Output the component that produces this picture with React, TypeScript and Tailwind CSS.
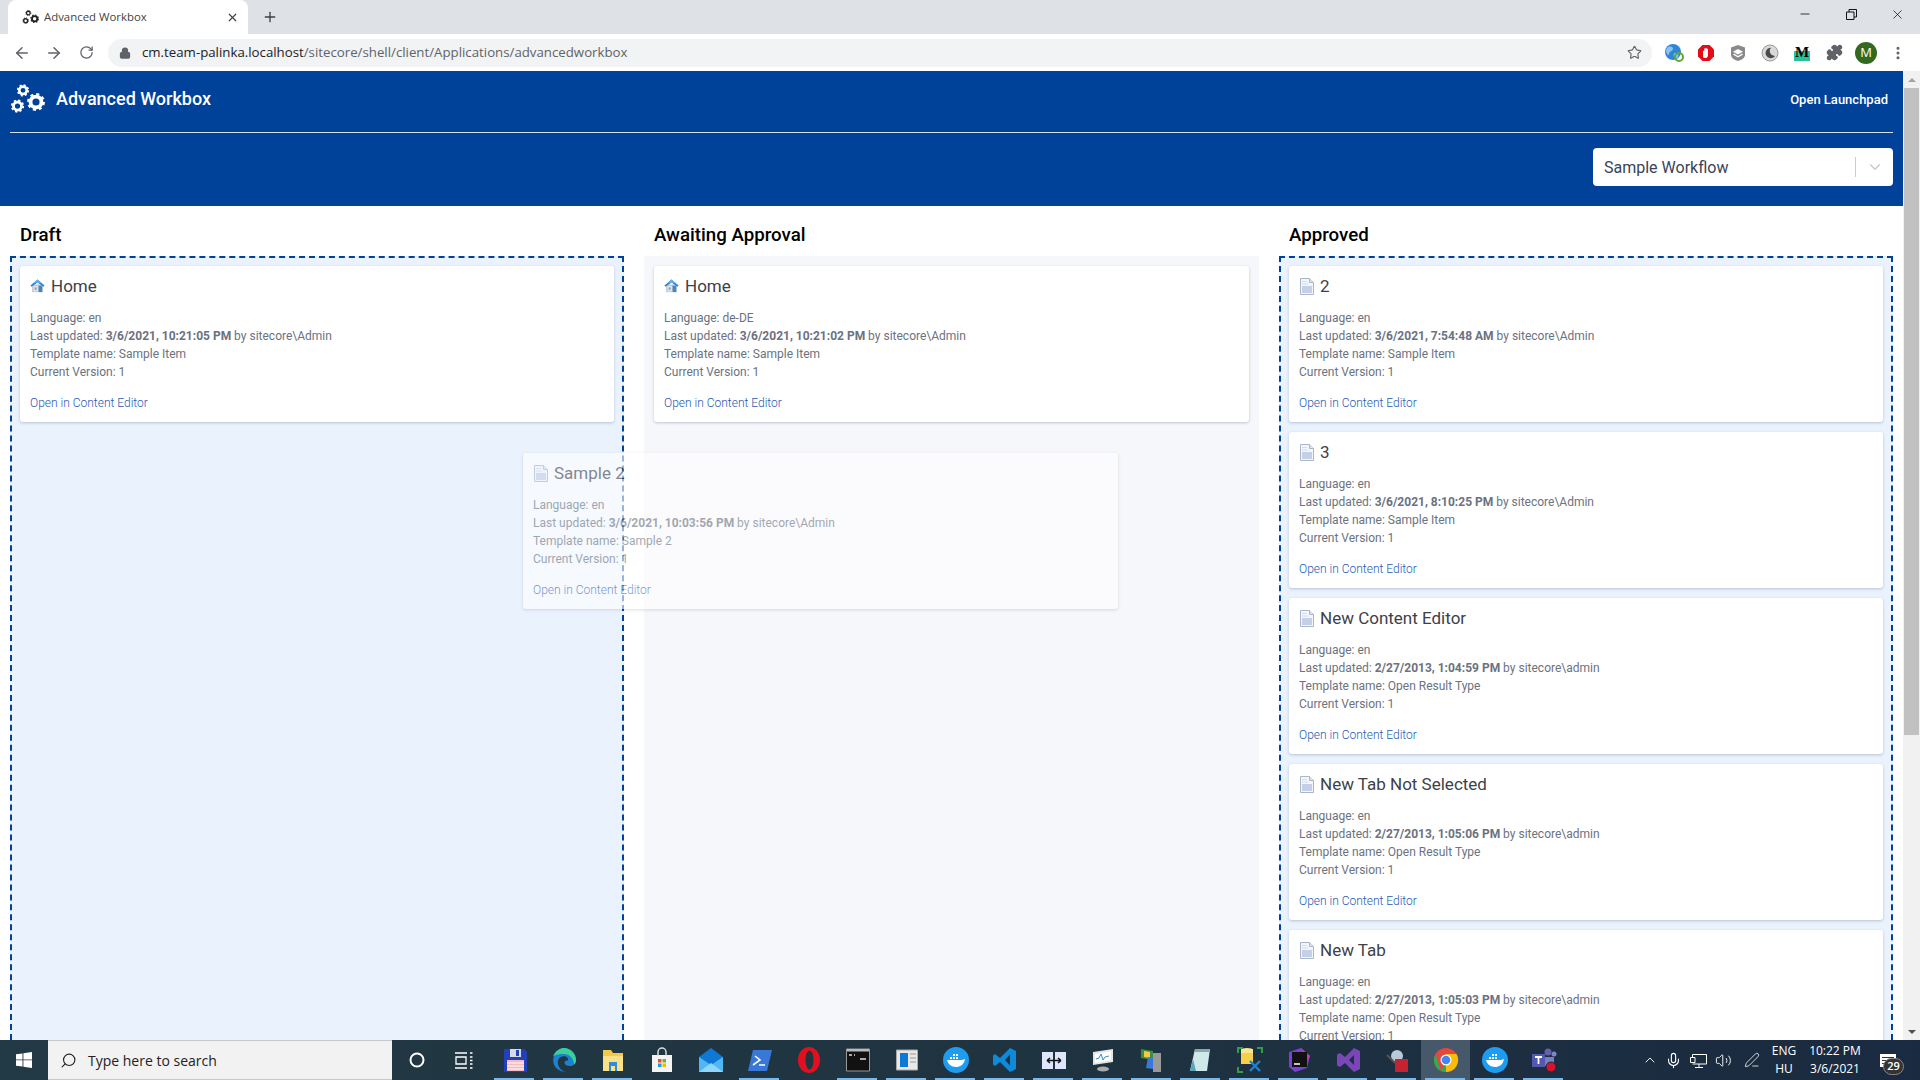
import React from "react";
import { ArrowLeft, ArrowRight, RotateCw, Lock, Star, Plus, X, Minus, ChevronDown, EllipsisVertical, Puzzle, Search, ChevronUp, Mic, Volume2, PenLine } from "lucide-react";

const Gear = ({ cx, cy, r, c = "#fff" }: { cx: number; cy: number; r: number; c?: string }) => {
  const outer = r * 1.02;
  const circ = 2 * Math.PI * outer;
  return (
    <g>
      <circle cx={cx} cy={cy} r={r * 0.72} fill="none" stroke={c} strokeWidth={r * 0.5} />
      <circle cx={cx} cy={cy} r={outer} fill="none" stroke={c} strokeWidth={r * 0.32} strokeDasharray={`${circ / 16} ${circ / 16}`} />
    </g>
  );
};

const Gears = ({ size, c = "#fff" }: { size: number; c?: string }) => (
  <svg width={size} height={size * 0.83} viewBox="0 0 35 29">
    <Gear cx={13} cy={6.300} r={5.200} c={c} />
    <Gear cx={7.500} cy={22} r={5.600} c={c} />
    <Gear cx={26} cy={18} r={7.600} c={c} />
  </svg>
);

const HomeIcon = () => (
  <svg width="16" height="16" viewBox="0 0 16 16">
    <path d="M2.500 6.500h11v8h-11z" fill="#a9b4bf" />
    <path d="M3.500 7.500h5v6.500h-5z" fill="#dfe5eb" />
    <path d="M5 9.500h2v2.500H5z" fill="#7f9db8" />
    <path d="M9.500 8h3.500v6.500H9.500z" fill="#3f87c8" />
    <path d="M8 1 15.500 7.500l-1 1.200L8 4.300 1.500 8.700l-1-1.200z" fill="#2f80d0" />
    <path d="M8 1 12.800 5.300 8 4.300 3.200 5.300z" fill="#63b0ec" />
  </svg>
);

const DocIcon = () => (
  <svg width="14" height="17" viewBox="0 0 14 17">
    <path d="M.5.5h9l4 4v12H.5z" fill="#f3f6fb" stroke="#a9b6cc" />
    <path d="M9.500.5v4h4" fill="#dfe6f2" stroke="#a9b6cc" />
    <path d="M2 8h10v7H2z" fill="#c5d0e6" />
    <path d="M2 3h5v1H2zM2 5.500h6v1H2z" fill="#d4dcea" />
  </svg>
);

type CardData = { icon: "home" | "doc"; title: string; lang: string; date: string; by: string; tpl: string };

const Card = ({ d, className = "" }: { d: CardData; className?: string }) => (
  <div className={`h-[156px] shrink-0 rounded-[3px] bg-white p-[10px] shadow-[0_1px_3px_rgba(60,70,100,0.28)] font-['Roboto',sans-serif] ${className}`}>
    <div className="flex h-[20px] items-center gap-[6px] text-[17px] leading-[20px] text-[#3d4148]">
      <span className="flex w-[15px] justify-center">{d.icon === "home" ? <HomeIcon /> : <DocIcon />}</span>
      <span>{d.title}</span>
    </div>
    <div className="mt-[13px] text-[12px] leading-[18px] text-[#6b7280]">
      <div>Language: {d.lang}</div>
      <div>
        Last updated: <b className="font-bold">{d.date}</b> by {d.by}
      </div>
      <div>Template name: {d.tpl}</div>
      <div>Current Version: 1</div>
    </div>
    <div className="mt-[13px] text-[12px] font-light leading-[18px] text-[#1f5ab4]">Open in Content Editor</div>
  </div>
);

const draft: CardData[] = [{ icon: "home", title: "Home", lang: "en", date: "3/6/2021, 10:21:05 PM", by: "sitecore\\Admin", tpl: "Sample Item" }];
const awaiting: CardData[] = [{ icon: "home", title: "Home", lang: "de-DE", date: "3/6/2021, 10:21:02 PM", by: "sitecore\\Admin", tpl: "Sample Item" }];
const approved: CardData[] = [
  { icon: "doc", title: "2", lang: "en", date: "3/6/2021, 7:54:48 AM", by: "sitecore\\Admin", tpl: "Sample Item" },
  { icon: "doc", title: "3", lang: "en", date: "3/6/2021, 8:10:25 PM", by: "sitecore\\Admin", tpl: "Sample Item" },
  { icon: "doc", title: "New Content Editor", lang: "en", date: "2/27/2013, 1:04:59 PM", by: "sitecore\\admin", tpl: "Open Result Type" },
  { icon: "doc", title: "New Tab Not Selected", lang: "en", date: "2/27/2013, 1:05:06 PM", by: "sitecore\\admin", tpl: "Open Result Type" },
  { icon: "doc", title: "New Tab", lang: "en", date: "2/27/2013, 1:05:03 PM", by: "sitecore\\admin", tpl: "Open Result Type" },
];
const sample: CardData = { icon: "doc", title: "Sample 2", lang: "en", date: "3/6/2021, 10:03:56 PM", by: "sitecore\\Admin", tpl: "Sample 2" };

const Column = ({ title, cards, active }: { title: string; cards: CardData[]; active: boolean }) => (
  <div className="flex min-h-0 min-w-0 flex-col">
    <h2 className="mb-[11px] mt-[19px] px-[10px] font-['Roboto',sans-serif] text-[18.700px] font-medium leading-[20px] text-black">{title}</h2>
    <div className={`-mb-[10px] flex min-h-0 flex-1 flex-col gap-[10px] overflow-hidden ${active ? "border-2 border-dashed border-[#00419c] bg-[#eaf2fe] p-[8px]" : "bg-[#f5f7fa] p-[10px]"}`}>
      {cards.map((c) => (
        <Card key={c.title} d={c} />
      ))}
    </div>
  </div>
);

const Ext = {
  globe: (
    <svg width="22" height="22" viewBox="0 0 22 22">
      <circle cx="10" cy="10" r="8" fill="#2f86d8" />
      <path d="M5 5c3-1 5 0 5 2s-4 2-4 5-3-1-3-3 1-3 2-4zM12 11c3 0 4 2 3 4s-3 2-4 0 0-4 1-4z" fill="#8cc2ee" />
      <circle cx="16" cy="15" r="4" fill="none" stroke="#5fa82e" strokeWidth="2" />
    </svg>
  ),
  stop: (
    <svg width="18" height="18" viewBox="0 0 18 18">
      <path d="M5.500 1h7L17 5.500v7L12.500 17h-7L1 12.500v-7z" fill="#e30d17" />
      <path d="M6 13V7.500c0-.9 1.200-.9 1.200 0V5c0-.9 1.300-.9 1.300 0v-.5c0-.9 1.300-.9 1.300 0V5.500c0-.9 1.200-.9 1.200 0V11c0 2-1 3-2.500 3S6.500 14 6 13z" fill="#fff" />
    </svg>
  ),
  shield: (
    <svg width="18" height="18" viewBox="0 0 18 18">
      <path d="M9 1l7 2.400V11c0 3-3.500 5-7 6-3.500-1-7-3-7-6V3.400z" fill="#8a8a8a" />
      <path d="M9 5l5 2.800L9 10.600 4 7.800z" fill="#fff" />
      <path d="M4.500 10.200 9 12.800l4.500-2.600" fill="none" stroke="#fff" strokeWidth="1.400" />
    </svg>
  ),
  moon: (
    <svg width="18" height="18" viewBox="0 0 18 18">
      <circle cx="9" cy="9" r="8" fill="#d9d9d9" stroke="#9a9a9a" />
      <path d="M10 3.800a5.200 5.200 0 1 0 4 8.200 5 5 0 0 1-4-8.200z" fill="#4a4a4a" />
    </svg>
  ),
  m: (
    <div className="flex h-[16px] w-[16px] items-center justify-center bg-gradient-to-b from-white from-40% to-[#2bbf9c] to-40%">
      <span className="font-['Liberation_Serif',serif] text-[15px] font-bold leading-none text-black">M</span>
    </div>
  ),
};

const Chrome = () => (
  <div className="shrink-0 font-['Open_Sans',sans-serif]">
    <div className="relative flex h-[34px] bg-[#dee1e6]">
      <div className="ml-[8px] flex h-[34px] w-[240px] items-center rounded-t-[8px] bg-white pl-[13px] pr-[9px]">
        <span className="flex w-[18px] justify-center"><Gears size={17} c="#222" /></span>
        <span className="ml-[5px] flex-1 text-[11.400px] text-[#444]">Advanced Workbox</span>
        <X size={13} strokeWidth={2.2} className="text-[#444]" />
      </div>
      <div className="ml-[14px] flex h-[34px] items-center">
        <Plus size={16} strokeWidth={2} className="text-[#3c4043]" />
      </div>
      <div className="ml-auto flex h-[28px] items-center text-[#111]">
        <div className="flex w-[46px] justify-center"><Minus size={14} strokeWidth={1.4} /></div>
        <div className="flex w-[46px] justify-center">
          <svg width="11" height="11" viewBox="0 0 11 11" fill="none" stroke="#111"><path d="M.5 3h7.500v7.500H.5zM3 3V.5h7.500V8H8" /></svg>
        </div>
        <div className="flex w-[46px] justify-center"><X size={15} strokeWidth={1.2} /></div>
      </div>
    </div>
    <div className="flex h-[37px] items-center bg-white">
      <div className="flex w-[108px] items-center text-[#5f6368]">
        <span className="flex w-[44px] justify-center"><ArrowLeft size={18} strokeWidth={2} /></span>
        <span className="flex w-[20px] justify-center"><ArrowRight size={18} strokeWidth={2} /></span>
        <span className="flex w-[44px] justify-center"><RotateCw size={15} strokeWidth={2} /></span>
      </div>
      <div className="flex h-[28px] w-[1544px] items-center rounded-full bg-[#f1f3f4] pl-[11px] pr-[10px]">
        <Lock size={12} strokeWidth={2.5} fill="#5f6368" className="text-[#5f6368]" />
        <span className="ml-[11px] flex-1 text-[13.250px] text-[#5f6368]">
          <span className="text-[#202124]">cm.team-palinka.localhost</span>/sitecore/shell/client/Applications/advancedworkbox
        </span>
        <Star size={15} strokeWidth={1.8} className="text-[#5f6368]" />
      </div>
      <div className="ml-[6px] flex flex-1 items-center">
        {[Ext.globe, Ext.stop, Ext.shield, Ext.moon, Ext.m].map((e, i) => (
          <span key={i} className="flex w-[32px] justify-center">{e}</span>
        ))}
        <span className="flex w-[32px] justify-center"><Puzzle size={17} fill="#5f6368" className="text-[#5f6368]" /></span>
        <span className="flex w-[32px] justify-center">
          <span className="flex h-[22px] w-[22px] items-center justify-center rounded-full bg-[#33691e] text-[13px] text-white">M</span>
        </span>
        <span className="flex w-[32px] justify-center"><EllipsisVertical size={16} strokeWidth={2.6} className="text-[#5f6368]" /></span>
      </div>
    </div>
  </div>
);

const Header = () => (
  <header className="h-[135px] shrink-0 bg-[#00419a] px-[10px] font-['Roboto',sans-serif] text-white">
    <div className="flex h-[62px] items-start border-b border-[#d5dfee]">
      <div className="mt-[13px]"><Gears size={35} /></div>
      <span className="ml-[11px] mt-[16px] text-[18px] font-medium leading-[24px]">Advanced Workbox</span>
      <span className="ml-auto mr-[5px] mt-[21px] text-[13px] font-medium leading-[16px]">Open Launchpad</span>
    </div>
    <div className="mt-[15px] flex justify-end">
      <div className="flex h-[38px] w-[300px] items-center rounded-[4px] bg-white pl-[11px] text-[16px] text-[#3a4358]">
        <span className="flex-1 pt-[1px]">Sample Workflow</span>
        <span className="h-[20px] w-px bg-[#ccc]" />
        <span className="flex w-[37px] justify-center"><ChevronDown size={18} strokeWidth={2} className="text-[#ccc]" /></span>
      </div>
    </div>
  </header>
);

const Scrollbar = () => (
  <div className="flex w-[17px] shrink-0 flex-col bg-[#f1f1f1]">
    <div className="flex h-[17px] items-center justify-center">
      <span className="h-0 w-0 border-x-[4px] border-b-[4px] border-x-transparent border-b-[#a3a3a3]" />
    </div>
    <div className="mx-[1px] h-[647px] bg-[#c1c1c1]" />
    <div className="flex-1" />
    <div className="flex h-[17px] items-center justify-center">
      <span className="h-0 w-0 border-x-[4px] border-t-[4px] border-x-transparent border-t-[#505050]" />
    </div>
  </div>
);

const I = ({ children, w = 26, h = 26 }: { children: React.ReactNode; w?: number; h?: number }) => (
  <svg width={w} height={h} viewBox="0 0 26 26">{children}</svg>
);

const Docker = () => (
  <I>
    <circle cx="13" cy="13" r="13" fill="#1d9cf0" />
    <path d="M4 13h15c1 0 2-1 3-1-1 6-5 8-9 8-5 0-8-3-9-7z" fill="#fff" />
    <path d="M7 10h2v2H7zM10 10h2v2h-2zM13 10h2v2h-2zM10 7h2v2h-2zM13 7h2v2h-2z" fill="#fff" />
  </I>
);

const taskItems: { icon: React.ReactNode; on?: boolean; sel?: boolean }[] = [
  { icon: <I><circle cx="13" cy="13" r="6.500" fill="none" stroke="#fff" strokeWidth="2" /></I> },
  { icon: <I><g fill="none" stroke="#fff" strokeWidth="1.300"><path d="M3 10h10v7H3zM2 6h12M2 21h12M17 6h2.500M17 10h2.500M17 13.500h2.500M17 17h2.500M17 21h2.500" /></g></I> },
  { on: true, icon: <I><path d="M2 2h20l3 3v20H2z" fill="#2340b8" /><path d="M8 2h11v8H8z" fill="#d6d9e6" /><path d="M14 3h3v6h-3z" fill="#2340b8" /><path d="M5 13h17v11H5z" fill="#f6b9c0" /><path d="M5 16h17M5 19h17M5 22h17" stroke="#fff" /></I> },
  { on: true, icon: <I><path d="M13 1a12 12 0 0 1 12 12c0 4-3 6-6.500 6-3 0-5-1.500-5-3.500 0-1.500 1.500-2 3-2 1 0 1-3-2-4C10 8.500 6 12 7 17c.8 4 4 7.500 8.500 8A12 12 0 0 1 13 1z" fill="#1f7fd0" /><path d="M2 10C4 3 10 1 13 1c6 0 12 5 12 12 0 2-1 3.500-2 4.500 0-6-5-11-11-10.500C7 7 3 8 2 10z" fill="#3ccf9a" /></I> },
  { on: true, icon: <I><path d="M3 3h8l2 3h10v18H3z" fill="#f5c948" /><path d="M3 9h20v15H3z" fill="#fbe08a" /><path d="M9 15h8v9h-2v-5h-4v5H9z" fill="#2a8fd8" /></I> },
  { icon: <I><path d="M3 8h20v17H3z" fill="#f4f4f4" /><path d="M9 9V5a4 4 0 0 1 8 0v4" fill="none" stroke="#ddd" strokeWidth="1.500" /><path d="M9 12h3.500v3.500H9z" fill="#e8502c" /><path d="M13.500 12H17v3.500h-3.500z" fill="#7ab51d" /><path d="M9 16.500h3.500V20H9z" fill="#1b9be0" /><path d="M13.500 16.500H17V20h-3.500z" fill="#f8ba00" /></I> },
  { icon: <I><path d="M1 10 13 1l12 9v15H1z" fill="#0f78d4" /><path d="M1 10l12 8 12-8v15H1z" fill="#4fb8f2" /><path d="M1 25l12-9 12 9z" fill="#8fd6fa" /></I> },
  { on: true, icon: <I><path d="M6 3h19l-5 21H1z" fill="#3a78d8" /><path d="M8 9l5 4-7 5M12 18h6" fill="none" stroke="#fff" strokeWidth="1.600" /></I> },
  { icon: <I><ellipse cx="13" cy="13" rx="11" ry="13" fill="#e01020" /><ellipse cx="13.500" cy="13" rx="4" ry="9.500" fill="#1f3540" /></I> },
  { on: true, icon: <I><path d="M1.500 2h23v22h-23z" fill="#111" stroke="#999" /><path d="M2 2h22v2.500H2z" fill="#bbb" /><path d="M4 8h3M9 8h1M15 12h6" stroke="#ddd" strokeWidth="1.500" /></I> },
  { on: true, icon: <I><path d="M2.500 3h21v20h-21z" fill="#e8e8e8" stroke="#aaa" /><path d="M6 6h8v14H6z" fill="#0f78d4" /><path d="M16 7h6M16 11h6M16 15h6" stroke="#999" /></I> },
  { on: true, icon: <Docker /> },
  { on: true, icon: <I><path d="M18 1l6 3v18l-6 3L8 15l-5 4-2-1.500V8.500L3 7l5 4zM18 7.500 13 13l5 5.500z" fill="#0f8ad8" /></I> },
  { on: true, icon: <I><path d="M1 5h11v17H1zM14 5h11v17H14z" fill="#dde6fb" /><path d="M6 13.500h14M6 13.500l3-2.500M6 13.500l3 2.500M20 13.500l-3-2.500M20 13.500l-3 2.500" stroke="#111" strokeWidth="1.500" fill="none" /></I> },
  { on: true, icon: <I><path d="M3 5 23 2v13L3 18z" fill="#e6e6e6" /><path d="M5 7l16-3v9L5 16z" fill="#fff" /><path d="M6 12l3-1 2-4 2 6 2-3 4-1" stroke="#3a8fd8" fill="none" /><ellipse cx="13" cy="22" rx="6" ry="2.500" fill="#aaa" /></I> },
  { on: true, icon: <I><path d="M2 2l12 2v9L2 11z" fill="#3a8f3a" /><path d="M5 4l6 1v6l-6-1z" fill="#f5c948" /><path d="M14 6h8v19h-8z" fill="#999" /><path d="M9 10l5 1v11l-7-1z" fill="#3a78d8" /></I> },
  { on: true, icon: <I><path d="M7 2h15l-3 22H2z" fill="#cfe8ea" /><path d="M7 2h15l-1 3H6.500z" fill="#8aa" /><path d="M5 12 2 24h6z" fill="#5aa7b8" /></I> },
  { on: true, icon: <I><path d="M4 2h12v15H4z" fill="#f5d048" /><path d="M4 3a6 2 0 0 1 12 0v3H4z" fill="#fbe58f" /><path d="M1 6V1h5M25 6V1h-5M1 20v5h5" fill="none" stroke="#2f9e44" strokeWidth="2" /><path d="M13 14l10 10M23 14 13 24" stroke="#1f7fd0" strokeWidth="2.400" /></I> },
  { on: true, icon: <I><path d="M3 5 15 1l9 8-3 12-12 4-6-5z" fill="#7c3fd8" /><path d="M15 1l9 8-3 5z" fill="#e0319c" /><path d="M6 5h15v15H6z" fill="#111" /><path d="M8 17h6" stroke="#fff" strokeWidth="1.500" /></I> },
  { on: true, icon: <I><path d="M19 1l6 3v18l-6 3-9-9-5 4-3-1.500V7.500L5 6l5 4zM19 8l-5 5 5 5z" fill="#7b46b8" /></I> },
  { on: true, icon: <I><circle cx="13" cy="9" r="6" fill="#b9c9d8" /><path d="M11 12h13v13H11z" fill="#c62330" /><path d="M3 8l8 8" stroke="#555" strokeWidth="2" /></I> },
  { on: true, sel: true, icon: <I><circle cx="13" cy="13" r="12" fill="#e8453c" /><path d="M13 13 23.400 19A12 12 0 0 1 8 24z" fill="#34a853" /><path d="M2.600 7 8 24A12 12 0 0 1 2.600 7z" fill="#34a853" /><path d="M13 7h10.500A12 12 0 0 1 13 25z" fill="#fbbc05" /><circle cx="13" cy="13" r="5.500" fill="#fff" /><circle cx="13" cy="13" r="4.300" fill="#4285f4" /></I> },
  { on: true, icon: <Docker /> },
  { on: true, icon: <I><circle cx="17" cy="5" r="3.500" fill="#6264a7" /><circle cx="23" cy="7" r="2.500" fill="#8385c8" /><path d="M13 10h10v9h-10z" fill="#7b7dc4" /><path d="M1 7h13v13H1z" fill="#5558af" /><path d="M4 10h7M7.500 10v7" stroke="#fff" strokeWidth="1.800" /><circle cx="20" cy="20" r="5" fill="#d6122d" stroke="#1b2a3f" /></I> },
];

const Taskbar = () => (
  <div className="relative flex h-[40px] shrink-0 items-stretch bg-gradient-to-r from-[#223a45] via-[#1f3440] to-[#1a2a40] font-['Open_Sans',sans-serif] text-white">
    <div className="flex w-[48px] items-center justify-center">
      <svg width="16" height="16" viewBox="0 0 16 16" fill="#fff"><path d="M0 2.300 6.500 1.400v6H0zM7.400 1.300 16 0v7.400H7.400zM0 8.300h6.500v6.200L0 13.700zM7.400 8.300H16V16l-8.600-1.300z" /></svg>
    </div>
    <div className="flex w-[344px] items-center border-y border-[#c8c8c8] bg-[#f2f2f2] pl-[12px]">
      <Search size={17} strokeWidth={1.6} className="scale-x-[-1] text-[#222]" />
      <span className="ml-[11px] text-[14px] text-[#222]">Type here to search</span>
    </div>
    {taskItems.map((t, i) => (
      <div key={i} className={`relative flex w-[49px] items-center justify-center ${t.sel ? "bg-[#45596a]" : ""}`}>
        {t.icon}
        {t.on && <span className="absolute bottom-0 left-[4px] right-[5px] h-[2px] bg-[#76b9ed]" />}
      </div>
    ))}
    <div className="ml-auto flex items-center pr-[12px]">
      <span className="flex w-[24px] justify-center"><ChevronUp size={16} strokeWidth={1.4} /></span>
      <span className="flex w-[22px] justify-center"><Mic size={17} strokeWidth={1.6} /></span>
      <span className="flex w-[28px] justify-center">
        <svg width="17" height="15" viewBox="0 0 17 15" fill="none" stroke="#fff"><path d="M2.500 1.500h14v9.500h-14M2.500 5V1.500M9 11v3M5 14.500h8M.5 4.500h4.500v5H.5z" /></svg>
      </span>
      <span className="flex w-[22px] justify-center"><Volume2 size={17} strokeWidth={1.3} /></span>
      <span className="ml-[6px] flex w-[24px] justify-center"><PenLine size={16} strokeWidth={1.2} /></span>
      <div className="ml-[4px] flex w-[32px] flex-col items-center text-[12px] leading-[18px]">
        <span>ENG</span>
        <span>HU</span>
      </div>
      <div className="ml-[5px] flex w-[60px] flex-col items-center text-[12px] leading-[18px]">
        <span>10:22 PM</span>
        <span>3/6/2021</span>
      </div>
      <div className="relative ml-[3px] flex w-[40px] justify-center">
        <span className="flex h-[13px] w-[16px] flex-col justify-center gap-[2px] bg-white px-[2px]">
          <span className="h-px bg-[#333]" />
          <span className="h-px bg-[#333]" />
          <span className="h-px bg-[#333]" />
        </span>
        <span className="absolute left-[15px] top-[4px] flex h-[17px] w-[21px] items-center justify-center rounded-full border border-[#888] bg-[#333] text-[11px] font-semibold">29</span>
      </div>
    </div>
  </div>
);

export default function App() {
  return (
    <div className="flex h-screen w-full flex-col overflow-hidden bg-white">
      <Chrome />
      <div className="relative flex min-h-0 flex-1">
        <div className="flex min-h-0 min-w-0 flex-1 flex-col">
          <Header />
          <main className="grid min-h-0 flex-1 grid-cols-[614px_615px_614px] gap-x-[20px] overflow-hidden px-[10px]">
            <Column title="Draft" cards={draft} active />
            <Column title="Awaiting Approval" cards={awaiting} active={false} />
            <Column title="Approved" cards={approved} active />
          </main>
        </div>
        <Scrollbar />
        <Card d={sample} className="absolute left-[523px] top-[382px] w-[595px] opacity-60" />
      </div>
      <Taskbar />
    </div>
  );
}
